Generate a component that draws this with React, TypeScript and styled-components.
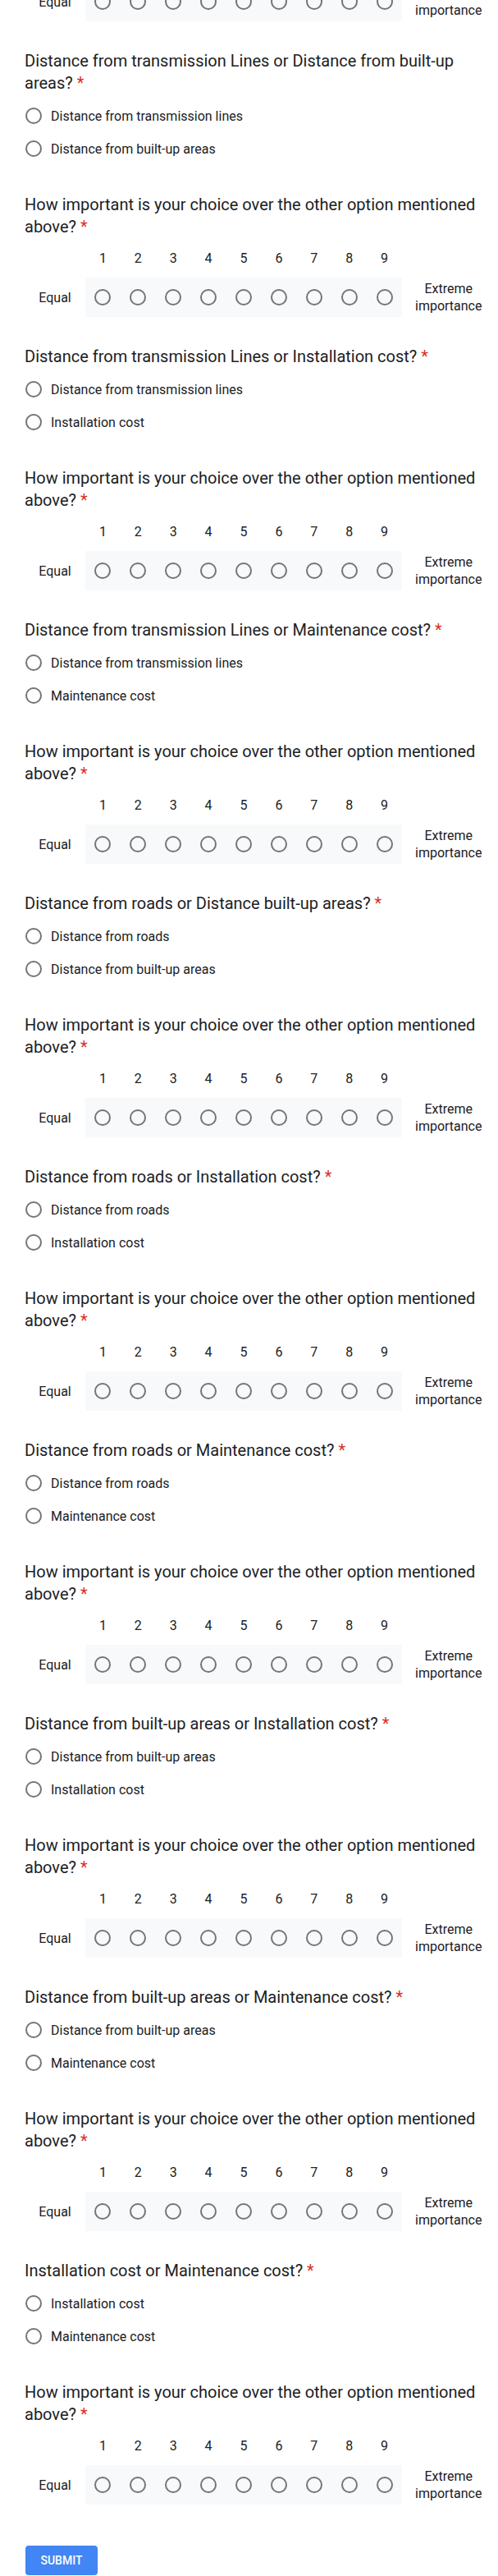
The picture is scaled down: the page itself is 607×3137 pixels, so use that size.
import React from "react";
import styled, { createGlobalStyle } from "styled-components";

const GlobalStyle = createGlobalStyle`
  html, body {
    margin: 0;
    padding: 0;
    background: #ffffff;
  }
  body {
    font-family: Roboto, "Noto Sans", Arial, sans-serif;
    color: #202124;
  }
`;

const Page = styled.main`
  display: flex;
  flex-direction: column;
  gap: 35px;
  padding: 0 20px 0 30px;
`;

const TopFragment = styled.div`
  height: 26px;
  overflow: hidden;
  display: flex;
  flex-direction: column;
  justify-content: flex-end;
`;

const Question = styled.section`
  display: flex;
  flex-direction: column;
`;

const Title = styled.div`
  font-size: 20px;
  line-height: 27px;
  font-weight: 400;
  color: #202124;
`;

const Required = styled.span`
  color: #d93025;
`;

const Options = styled.div`
  display: flex;
  flex-direction: column;
  margin-top: 6px;
`;

const OptionRow = styled.label`
  display: flex;
  align-items: center;
  height: 40px;
  gap: 11px;
  padding-left: 1px;
  font-size: 16px;
  color: #202124;
  cursor: pointer;
`;

const Radio = styled.span`
  display: inline-block;
  flex: none;
  width: 20px;
  height: 20px;
  box-sizing: border-box;
  border: 2px solid #757575;
  border-radius: 50%;
  background: transparent;
`;

const ScaleWrap = styled.div`
  display: flex;
  align-items: flex-end;
  flex-shrink: 0;
`;

const ScaleLabel = styled.div<{ $side: "left" | "right" }>`
  flex: none;
  height: 48px;
  display: flex;
  align-items: center;
  justify-content: center;
  text-align: center;
  font-size: 16px;
  line-height: 21px;
  color: #202124;
  box-sizing: border-box;
  ${(p) =>
    p.$side === "left"
      ? `width: 74px;`
      : `width: min-content; padding: 0 16px;`}
`;

const ScaleCenter = styled.div`
  display: flex;
  flex-direction: column;
  width: 386px;
  flex: none;
`;

const NumbersRow = styled.div`
  display: flex;
  height: 48px;
`;

const NumberCell = styled.div`
  flex: 1;
  display: flex;
  align-items: center;
  justify-content: center;
  font-size: 16px;
  color: #202124;
`;

const RadioBox = styled.div`
  display: flex;
  height: 48px;
  background: #f8f9fa;
`;

const RadioCell = styled.div`
  flex: 1;
  display: flex;
  align-items: center;
  justify-content: center;
`;

const SubmitButton = styled.button`
  margin-top: 15px;
  align-self: flex-start;
  margin-left: 1px;
  width: 88px;
  height: 36px;
  border: none;
  border-radius: 4px;
  background: #4285f4;
  color: #ffffff;
  font-family: Roboto, "Noto Sans", Arial, sans-serif;
  font-size: 14px;
  font-weight: 500;
  text-transform: uppercase;
  letter-spacing: 0;
  padding: 0;
  cursor: pointer;
`;

const pairs: [string, string, string][] = [
  [
    "Distance from transmission Lines or Distance from built-up areas?",
    "Distance from transmission lines",
    "Distance from built-up areas",
  ],
  [
    "Distance from transmission Lines or Installation cost?",
    "Distance from transmission lines",
    "Installation cost",
  ],
  [
    "Distance from transmission Lines or Maintenance cost?",
    "Distance from transmission lines",
    "Maintenance cost",
  ],
  [
    "Distance from roads or Distance built-up areas?",
    "Distance from roads",
    "Distance from built-up areas",
  ],
  ["Distance from roads or Installation cost?", "Distance from roads", "Installation cost"],
  ["Distance from roads or Maintenance cost?", "Distance from roads", "Maintenance cost"],
  [
    "Distance from built-up areas or Installation cost?",
    "Distance from built-up areas",
    "Installation cost",
  ],
  [
    "Distance from built-up areas or Maintenance cost?",
    "Distance from built-up areas",
    "Maintenance cost",
  ],
  ["Installation cost or Maintenance cost?", "Installation cost", "Maintenance cost"],
];

const steps = [1, 2, 3, 4, 5, 6, 7, 8, 9];

function Scale() {
  return (
    <ScaleWrap>
      <ScaleLabel $side="left">Equal</ScaleLabel>
      <ScaleCenter>
        <NumbersRow>
          {steps.map((n) => (
            <NumberCell key={n}>{n}</NumberCell>
          ))}
        </NumbersRow>
        <RadioBox>
          {steps.map((n) => (
            <RadioCell key={n}>
              <Radio role="radio" aria-checked="false" aria-label={String(n)} />
            </RadioCell>
          ))}
        </RadioBox>
      </ScaleCenter>
      <ScaleLabel $side="right">Extreme importance</ScaleLabel>
    </ScaleWrap>
  );
}

function ChoiceQuestion({ title, a, b }: { title: string; a: string; b: string }) {
  return (
    <Question>
      <Title>
        {title}
        <Required> *</Required>
      </Title>
      <Options>
        <OptionRow>
          <Radio role="radio" aria-checked="false" />
          {a}
        </OptionRow>
        <OptionRow>
          <Radio role="radio" aria-checked="false" />
          {b}
        </OptionRow>
      </Options>
    </Question>
  );
}

function ScaleQuestion() {
  return (
    <Question>
      <Title>
        How important is your choice over the other option mentioned above?
        <Required> *</Required>
      </Title>
      <Scale />
    </Question>
  );
}

export default function App() {
  return (
    <>
      <GlobalStyle />
      <Page>
        <TopFragment>
          <Scale />
        </TopFragment>
        {pairs.map(([t, a, b], i) => (
          <React.Fragment key={i}>
            <ChoiceQuestion title={t} a={a} b={b} />
            <ScaleQuestion />
          </React.Fragment>
        ))}
        <SubmitButton type="button">Submit</SubmitButton>
      </Page>
    </>
  );
}
